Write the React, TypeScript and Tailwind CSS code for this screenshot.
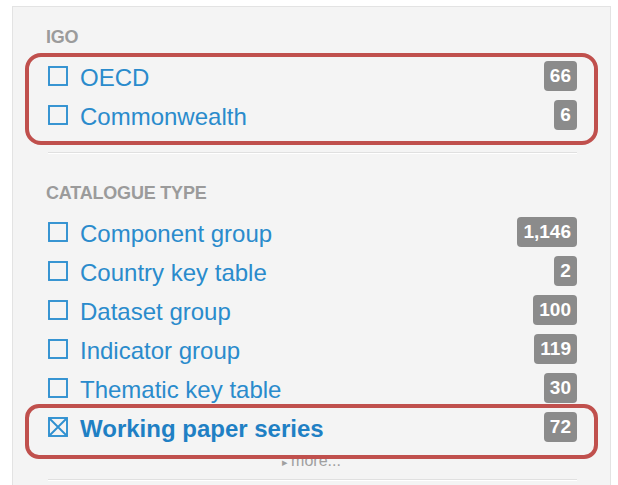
const igo = [
  { label: 'OECD', count: '66' },
  { label: 'Commonwealth', count: '6' },
];

const catalogueTypes = [
  { label: 'Component group', count: '1,146' },
  { label: 'Country key table', count: '2' },
  { label: 'Dataset group', count: '100' },
  { label: 'Indicator group', count: '119' },
  { label: 'Thematic key table', count: '30' },
  { label: 'Working paper series', count: '72', checked: true },
];

function Box({ checked }: { checked?: boolean }) {
  return (
    <svg width="20" height="20" viewBox="0 0 20 20" className="shrink-0 mt-[-4px]">
      <rect x="1" y="1" width="18" height="18" fill="none" stroke="#2f90d0" strokeWidth="1.9" />
      {checked && <path d="M2 2 L18 18 M18 2 L2 18" stroke="#2f90d0" strokeWidth="1.9" />}
    </svg>
  );
}

function FacetRow({ label, count, checked }: { label: string; count: string; checked?: boolean }) {
  return (
    <div className="flex items-center justify-between h-[39px]">
      <div className="flex items-center gap-[12px] pl-[2px]">
        <Box checked={checked} />
        <span
          className={
            checked
              ? 'text-[24px] leading-[39px] font-bold text-[#1f80c4]'
              : 'text-[24px] leading-[39px] text-[#2a8bcc]'
          }
        >
          {label}
        </span>
      </div>
      <span className="mt-[-4px] h-[30px] min-w-[23px] px-[6px] rounded-[4px] bg-[#8b8b8b] text-white text-[19px] font-bold leading-[30px] text-center">
        {count}
      </span>
    </div>
  );
}

function Heading({ children }: { children: string }) {
  return (
    <h3 className="text-[18px] leading-[22px] font-bold text-[#9b9b9b] uppercase tracking-[-0.2px]">{children}</h3>
  );
}

export default function App() {
  return (
    <div
      className="relative w-[618px] h-[485px] overflow-hidden bg-white"
      style={{ fontFamily: '"Liberation Sans", Arial, sans-serif' }}
    >
      <div className="ml-[12px] mt-[6px] w-[599px] h-[520px] border border-[#e3e3e3] bg-[#f4f4f4] pl-[33px] pr-[33px] pt-[19px]">
        <Heading>IGO</Heading>
        <div className="mt-[10px]">
          {igo.map((f) => (
            <FacetRow key={f.label} {...f} />
          ))}
        </div>
        <div className="mt-[16px] ml-[2px] border-t border-[#e0e0e0] border-b-white border-b" />

        <div className="mt-[28px]">
          <Heading>Catalogue type</Heading>
        </div>
        <div className="mt-[10px]">
          {catalogueTypes.map((f) => (
            <FacetRow key={f.label} {...f} />
          ))}
        </div>
        <div className="text-center text-[16px] leading-[18px] text-[#a0a0a0] mt-[4px]">
          <span className="text-[11px] mr-[3px]">▸</span>more...
        </div>
        <div className="mt-[8px] ml-[2px] border-t border-[#e0e0e0] border-b-white border-b" />
      </div>

      {/* annotation boxes */}
      <div className="absolute left-[25px] top-[53px] w-[573px] h-[92px] rounded-[16px] border-[4px] border-[#c0504d]" />
      <div className="absolute left-[25px] top-[404px] w-[573px] h-[55px] rounded-[14px] border-[4px] border-[#c0504d]" />
    </div>
  );
}
